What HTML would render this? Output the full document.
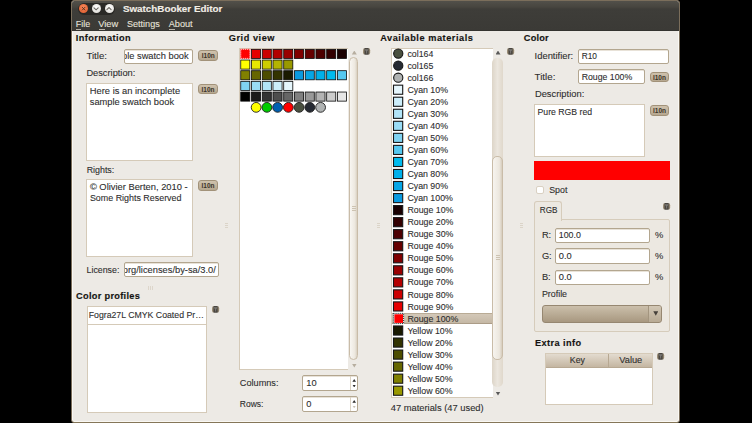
<!DOCTYPE html><html><head><meta charset='utf-8'><style>
html,body{margin:0;padding:0;background:#000;width:752px;height:423px;overflow:hidden;}
body{position:relative;font-family:"Liberation Sans",sans-serif;color:#2e2e2e;}
.a{position:absolute;box-sizing:border-box;}
.t{position:absolute;white-space:nowrap;-webkit-text-stroke:0.1px currentColor;}
.t[style*=bold]{-webkit-text-stroke:0.15px currentColor;}
.entry{position:absolute;box-sizing:border-box;background:#fff;border:1px solid #b3a68f;border-radius:2px;box-shadow:inset 0 1px 0 #e8e2d8;overflow:hidden;}
.tv{position:absolute;box-sizing:border-box;background:#fff;border:1px solid #d5cab8;}
.l10n{position:absolute;box-sizing:border-box;border:1px solid #a29279;border-radius:3px;background:linear-gradient(#cfc2ad,#b6a78f);font-weight:bold;font-size:6.5px;line-height:9px;text-align:center;color:#3a3328;}
.ico{position:absolute;width:7px;height:7px;border-radius:50%;background:#6e675c;box-sizing:border-box;border:1px solid #8f877a;}
.ico:after{content:"";position:absolute;left:1px;top:1.5px;border-left:1.5px solid transparent;border-right:1.5px solid transparent;border-top:2.5px solid #d8d0c0;}
</style></head><body>
<div class="a" style="left:70.80px;top:0.00px;width:609.20px;height:423.20px;background:#edeae5;border-radius:3.5px;border:1px solid #7b6e5b;border-bottom:1.2px solid #857658;box-shadow:inset 1px 0 #faf8f3,inset -1px 0 #faf8f3,inset 0 -1px #faf8f3;"></div>
<div class="a" style="left:71.80px;top:1.00px;width:607.20px;height:30.00px;background:linear-gradient(#52504a 0px,#47453f 6px,#3e3d39 8px,#3b3a36 29px,#2e2d2a 30px);border-radius:2.5px 2.5px 0 0;"></div>
<div class="a" style="left:77.50px;top:3.00px;width:37.50px;height:12.00px;background:#2a2926;border-radius:6px;"></div>
<div class="a" style="left:79.00px;top:4.20px;width:9.00px;height:9.00px;background:radial-gradient(circle at 50% 35%,#f5875a,#e0592a);border-radius:50%;"></div>
<div class="a" style="left:91.60px;top:4.20px;width:9.00px;height:9.00px;background:radial-gradient(circle at 50% 35%,#ffffff,#d9d6cf);border-radius:50%;"></div>
<div class="a" style="left:104.50px;top:4.20px;width:9.00px;height:9.00px;background:radial-gradient(circle at 50% 35%,#ffffff,#d9d6cf);border-radius:50%;"></div>
<svg class="a" style="left:0;top:0" width="752" height="40"><g stroke-linecap="round" fill="none"><path d="M82.3 7.3 L84.9 10.0 M84.9 7.3 L82.3 10.0" stroke="#4d2c1e" stroke-width="0.85"/><path d="M94 7.8 L96.1 9.8 L98.2 7.8" stroke="#6b6862" stroke-width="1.1"/><path d="M106.9 9.6 L109 7.6 L111.1 9.6" stroke="#6b6862" stroke-width="1.1"/></g></svg>
<div class="t" style="left:122.90px;top:4.20px;font-size:9.84px;line-height:9.84px;font-weight:bold;color:#f2eee6;">SwatchBooker Editor</div>
<div class="t" style="left:75.80px;top:20.30px;font-size:8.88px;line-height:8.88px;color:#e6e2d9;">File</div>
<div class="a" style="left:76.10px;top:28.50px;width:4.80px;height:0.80px;background:#b8b2a8;"></div>
<div class="t" style="left:98.20px;top:20.30px;font-size:9.36px;line-height:9.36px;color:#e6e2d9;">View</div>
<div class="a" style="left:98.50px;top:28.50px;width:6.00px;height:0.80px;background:#b8b2a8;"></div>
<div class="t" style="left:126.90px;top:20.30px;font-size:9.12px;line-height:9.12px;color:#e6e2d9;">Settings</div>
<div class="t" style="left:168.70px;top:20.30px;font-size:9.19px;line-height:9.19px;color:#e6e2d9;">About</div>
<div class="a" style="left:169.00px;top:28.50px;width:6.00px;height:0.80px;background:#b8b2a8;"></div>
<div class="t" style="left:75.70px;top:33.80px;font-size:9.2px;line-height:9.2px;letter-spacing:0.443px;font-weight:bold;color:#151412;">Information</div>
<div class="t" style="left:86.40px;top:50.80px;font-size:9.67px;line-height:9.67px;">Title:</div>
<div class="entry" style="left:124.4px;top:48.5px;width:68.3px;height:15px;"><div class="t" style="right:3px;top:2.6px;font-size:9.3px;line-height:9.3px;">ample swatch book</div></div>
<div class="l10n" style="left:198.3px;top:50.2px;width:20.0px;height:11.0px;">l10n</div>
<div class="t" style="left:86.40px;top:69.40px;font-size:9.28px;line-height:9.28px;">Description:</div>
<div class="a" style="left:86.00px;top:83.30px;width:107.40px;height:77.90px;background:#fff;border:1px solid #d5cab8;"></div>
<div class="t" style="left:89.80px;top:87.40px;font-size:9.35px;line-height:9.35px;">Here is an incomplete</div>
<div class="t" style="left:89.80px;top:98.00px;font-size:9.3px;line-height:9.3px;">sample swatch book</div>
<div class="l10n" style="left:198.3px;top:83.6px;width:19.399999999999977px;height:10.800000000000011px;">l10n</div>
<div class="t" style="left:86.70px;top:166.20px;font-size:8.87px;line-height:8.87px;">Rights:</div>
<div class="a" style="left:86.00px;top:179.00px;width:107.40px;height:78.40px;background:#fff;border:1px solid #d5cab8;"></div>
<div class="t" style="left:89.90px;top:183.30px;font-size:9.35px;line-height:9.35px;">© Olivier Berten, 2010 -</div>
<div class="t" style="left:89.90px;top:194.20px;font-size:8.92px;line-height:8.92px;">Some Rights Reserved</div>
<div class="l10n" style="left:198.3px;top:180.2px;width:19.399999999999977px;height:10.700000000000017px;">l10n</div>
<div class="t" style="left:86.60px;top:266.00px;font-size:8.81px;line-height:8.81px;">License:</div>
<div class="entry" style="left:124.3px;top:262.3px;width:94.5px;height:15px;"><div class="t" style="right:2px;top:2.6px;font-size:9.3px;line-height:9.3px;">creativecommons.org/licenses/by-sa/3.0/</div></div>
<div class="a" style="left:148.00px;top:286.00px;width:1.00px;height:4.00px;background:#ddd6cb;"></div>
<div class="a" style="left:150.00px;top:286.00px;width:1.00px;height:4.00px;background:#ddd6cb;"></div>
<div class="a" style="left:152.00px;top:286.00px;width:1.00px;height:4.00px;background:#ddd6cb;"></div>
<div class="t" style="left:76.00px;top:292.20px;font-size:9.2px;line-height:9.2px;letter-spacing:0.319px;font-weight:bold;color:#151412;">Color profiles</div>
<div class="a" style="left:86.60px;top:305.50px;width:120.60px;height:107.00px;background:#fff;border:1px solid #d5cab8;"></div>
<div class="a" style="left:87.60px;top:306.50px;width:118.60px;height:18.00px;border-bottom:1px solid #d5cab8;"></div>
<div class="t" style="left:88.70px;top:311.00px;font-size:8.74px;line-height:8.74px;">Fogra27L CMYK Coated Pr…</div>
<svg class="a" style="left:211.60px;top:305.70px;overflow:visible" width="7.2" height="6.8"><defs><linearGradient id="ig" x1="0" x2="1" y1="0" y2="0"><stop offset="0" stop-color="#b3a286"/><stop offset="0.3" stop-color="#4a4640"/><stop offset="0.7" stop-color="#4a4640"/><stop offset="1" stop-color="#b3a286"/></linearGradient></defs><rect x="0" y="0" width="7.2" height="6.8" rx="2.2" fill="url(#ig)"/><path d="M1.6 1.3 L5.6 1.3 L4.1 3.6 L4.1 5.6 L3.1 5.6 L3.1 3.6 Z" fill="#7a7874"/></svg>
<div class="a" style="left:225.00px;top:223.00px;width:3.00px;height:1.00px;background:#dbd4c8;"></div>
<div class="a" style="left:225.00px;top:225.00px;width:3.00px;height:1.00px;background:#dbd4c8;"></div>
<div class="a" style="left:225.00px;top:227.00px;width:3.00px;height:1.00px;background:#dbd4c8;"></div>
<div class="a" style="left:376.70px;top:223.00px;width:3.00px;height:1.00px;background:#dbd4c8;"></div>
<div class="a" style="left:376.70px;top:225.00px;width:3.00px;height:1.00px;background:#dbd4c8;"></div>
<div class="a" style="left:376.70px;top:227.00px;width:3.00px;height:1.00px;background:#dbd4c8;"></div>
<div class="a" style="left:520.20px;top:223.00px;width:3.00px;height:1.00px;background:#dbd4c8;"></div>
<div class="a" style="left:520.20px;top:225.00px;width:3.00px;height:1.00px;background:#dbd4c8;"></div>
<div class="a" style="left:520.20px;top:227.00px;width:3.00px;height:1.00px;background:#dbd4c8;"></div>
<div class="t" style="left:228.80px;top:33.80px;font-size:9.2px;line-height:9.2px;letter-spacing:0.538px;font-weight:bold;color:#151412;">Grid view</div>
<div class="a" style="left:238.80px;top:47.50px;width:109.60px;height:322.80px;background:#fff;border:1px solid #d5cab8;border-right:none;"></div>
<div class="a" style="left:351.80px;top:50.50px;width:5.00px;height:4.00px;clip-path:polygon(50% 0,100% 100%,0 100%);background:#b7ae9f;"></div>
<div class="a" style="left:351.80px;top:363.50px;width:5.00px;height:4.00px;clip-path:polygon(0 0,100% 0,50% 100%);background:#b7ae9f;"></div>
<div class="a" style="left:348.60px;top:57.00px;width:9.90px;height:303.00px;background:linear-gradient(90deg,#f8f6f2,#ede8df 70%,#d8cfc0);border:1px solid #c9bca8;border-radius:5px;"></div>
<div class="a" style="left:352.00px;top:205.70px;width:4.00px;height:1.00px;background:#cdc3b2;"></div>
<div class="a" style="left:352.00px;top:207.70px;width:4.00px;height:1.00px;background:#cdc3b2;"></div>
<div class="a" style="left:352.00px;top:209.70px;width:4.00px;height:1.00px;background:#cdc3b2;"></div>
<svg class="a" style="left:363.10px;top:48.00px;overflow:visible" width="7.2" height="6.8"><defs><linearGradient id="ig" x1="0" x2="1" y1="0" y2="0"><stop offset="0" stop-color="#b3a286"/><stop offset="0.3" stop-color="#4a4640"/><stop offset="0.7" stop-color="#4a4640"/><stop offset="1" stop-color="#b3a286"/></linearGradient></defs><rect x="0" y="0" width="7.2" height="6.8" rx="2.2" fill="url(#ig)"/><path d="M1.6 1.3 L5.6 1.3 L4.1 3.6 L4.1 5.6 L3.1 5.6 L3.1 3.6 Z" fill="#7a7874"/></svg>
<svg class="a" style="left:0;top:0" width="752" height="423"><rect x="240.30" y="48.90" width="10" height="10" fill="#ff0000"/><rect x="240.80" y="49.40" width="9" height="9" fill="none" stroke="#fff" stroke-width="0.9" stroke-dasharray="1 1"/><rect x="251.49" y="49.35" width="9.1" height="9.1" fill="#e60000" stroke="#0a0a0a" stroke-width="0.8"/><rect x="262.23" y="49.35" width="9.1" height="9.1" fill="#cc0000" stroke="#0a0a0a" stroke-width="0.8"/><rect x="272.97" y="49.35" width="9.1" height="9.1" fill="#b30000" stroke="#0a0a0a" stroke-width="0.8"/><rect x="283.71" y="49.35" width="9.1" height="9.1" fill="#990000" stroke="#0a0a0a" stroke-width="0.8"/><rect x="294.45" y="49.35" width="9.1" height="9.1" fill="#800000" stroke="#0a0a0a" stroke-width="0.8"/><rect x="305.19" y="49.35" width="9.1" height="9.1" fill="#660000" stroke="#0a0a0a" stroke-width="0.8"/><rect x="315.93" y="49.35" width="9.1" height="9.1" fill="#4d0000" stroke="#0a0a0a" stroke-width="0.8"/><rect x="326.67" y="49.35" width="9.1" height="9.1" fill="#330000" stroke="#0a0a0a" stroke-width="0.8"/><rect x="337.41" y="49.35" width="9.1" height="9.1" fill="#1a0000" stroke="#0a0a0a" stroke-width="0.8"/><rect x="240.75" y="60.02" width="9.1" height="9.1" fill="#ffff00" stroke="#0a0a0a" stroke-width="0.8"/><rect x="251.49" y="60.02" width="9.1" height="9.1" fill="#e6e600" stroke="#0a0a0a" stroke-width="0.8"/><rect x="262.23" y="60.02" width="9.1" height="9.1" fill="#cccc00" stroke="#0a0a0a" stroke-width="0.8"/><rect x="272.97" y="60.02" width="9.1" height="9.1" fill="#b3b300" stroke="#0a0a0a" stroke-width="0.8"/><rect x="283.71" y="60.02" width="9.1" height="9.1" fill="#999900" stroke="#0a0a0a" stroke-width="0.8"/><rect x="240.75" y="70.69" width="9.1" height="9.1" fill="#808000" stroke="#0a0a0a" stroke-width="0.8"/><rect x="251.49" y="70.69" width="9.1" height="9.1" fill="#666600" stroke="#0a0a0a" stroke-width="0.8"/><rect x="262.23" y="70.69" width="9.1" height="9.1" fill="#4d4d00" stroke="#0a0a0a" stroke-width="0.8"/><rect x="272.97" y="70.69" width="9.1" height="9.1" fill="#333300" stroke="#0a0a0a" stroke-width="0.8"/><rect x="283.71" y="70.69" width="9.1" height="9.1" fill="#1a1a00" stroke="#0a0a0a" stroke-width="0.8"/><rect x="294.45" y="70.69" width="9.1" height="9.1" fill="#0a9ae0" stroke="#0a0a0a" stroke-width="0.8"/><rect x="305.19" y="70.69" width="9.1" height="9.1" fill="#06a6e6" stroke="#0a0a0a" stroke-width="0.8"/><rect x="315.93" y="70.69" width="9.1" height="9.1" fill="#00b0ea" stroke="#0a0a0a" stroke-width="0.8"/><rect x="326.67" y="70.69" width="9.1" height="9.1" fill="#00bbee" stroke="#0a0a0a" stroke-width="0.8"/><rect x="337.41" y="70.69" width="9.1" height="9.1" fill="#55c8f0" stroke="#0a0a0a" stroke-width="0.8"/><rect x="240.75" y="81.36" width="9.1" height="9.1" fill="#80d3f2" stroke="#0a0a0a" stroke-width="0.8"/><rect x="251.49" y="81.36" width="9.1" height="9.1" fill="#9adcf5" stroke="#0a0a0a" stroke-width="0.8"/><rect x="262.23" y="81.36" width="9.1" height="9.1" fill="#b2e4f7" stroke="#0a0a0a" stroke-width="0.8"/><rect x="272.97" y="81.36" width="9.1" height="9.1" fill="#cdeefa" stroke="#0a0a0a" stroke-width="0.8"/><rect x="283.71" y="81.36" width="9.1" height="9.1" fill="#e6f6fc" stroke="#0a0a0a" stroke-width="0.8"/><rect x="240.75" y="92.03" width="9.1" height="9.1" fill="#000000" stroke="#0a0a0a" stroke-width="0.8"/><rect x="251.49" y="92.03" width="9.1" height="9.1" fill="#1a1a1a" stroke="#0a0a0a" stroke-width="0.8"/><rect x="262.23" y="92.03" width="9.1" height="9.1" fill="#333333" stroke="#0a0a0a" stroke-width="0.8"/><rect x="272.97" y="92.03" width="9.1" height="9.1" fill="#4d4d4d" stroke="#0a0a0a" stroke-width="0.8"/><rect x="283.71" y="92.03" width="9.1" height="9.1" fill="#666666" stroke="#0a0a0a" stroke-width="0.8"/><rect x="294.45" y="92.03" width="9.1" height="9.1" fill="#808080" stroke="#0a0a0a" stroke-width="0.8"/><rect x="305.19" y="92.03" width="9.1" height="9.1" fill="#999999" stroke="#0a0a0a" stroke-width="0.8"/><rect x="315.93" y="92.03" width="9.1" height="9.1" fill="#b3b3b3" stroke="#0a0a0a" stroke-width="0.8"/><rect x="326.67" y="92.03" width="9.1" height="9.1" fill="#cccccc" stroke="#0a0a0a" stroke-width="0.8"/><rect x="337.41" y="92.03" width="9.1" height="9.1" fill="#e6e6e6" stroke="#0a0a0a" stroke-width="0.8"/><circle cx="256.14" cy="107.35" r="4.9" fill="#ffff00" stroke="#1c1c1c" stroke-width="0.9"/><circle cx="266.88" cy="107.35" r="4.9" fill="#00cc00" stroke="#1c1c1c" stroke-width="0.9"/><circle cx="277.62" cy="107.35" r="4.9" fill="#0060b0" stroke="#1c1c1c" stroke-width="0.9"/><circle cx="288.36" cy="107.35" r="4.9" fill="#ff0000" stroke="#1c1c1c" stroke-width="0.9"/><circle cx="299.10" cy="107.35" r="4.9" fill="#4a5040" stroke="#1c1c1c" stroke-width="0.9"/><circle cx="309.84" cy="107.35" r="4.9" fill="#262a33" stroke="#1c1c1c" stroke-width="0.9"/><circle cx="320.58" cy="107.35" r="4.9" fill="#b0b3b3" stroke="#1c1c1c" stroke-width="0.9"/></svg>
<div class="t" style="left:239.80px;top:379.40px;font-size:9.16px;line-height:9.16px;">Columns:</div>
<div class="t" style="left:239.80px;top:400.30px;font-size:8.49px;line-height:8.49px;">Rows:</div>
<div class="entry" style="left:302.2px;top:375.4px;width:56.2px;height:15.600000000000023px;"></div>
<div class="a" style="left:349.60px;top:376.40px;width:0.80px;height:13.60px;background:#dcd3c5;"></div>
<div class="a" style="left:352.40px;top:379.00px;width:3.60px;height:2.80px;clip-path:polygon(50% 0,100% 100%,0 100%);background:#2b2b2b;"></div>
<div class="a" style="left:352.40px;top:384.60px;width:3.60px;height:2.80px;clip-path:polygon(0 0,100% 0,50% 100%);background:#2b2b2b;"></div>
<div class="t" style="left:306.30px;top:379.00px;font-size:9.3px;line-height:9.3px;">10</div>
<div class="entry" style="left:302.2px;top:396.4px;width:56.2px;height:15.5px;"></div>
<div class="a" style="left:349.60px;top:397.40px;width:0.80px;height:13.50px;background:#dcd3c5;"></div>
<div class="a" style="left:352.40px;top:400.00px;width:3.60px;height:2.80px;clip-path:polygon(50% 0,100% 100%,0 100%);background:#2b2b2b;"></div>
<div class="a" style="left:352.40px;top:405.50px;width:3.60px;height:2.80px;clip-path:polygon(0 0,100% 0,50% 100%);background:#c9c1b4;"></div>
<div class="t" style="left:306.30px;top:400.00px;font-size:9.3px;line-height:9.3px;">0</div>
<div class="t" style="left:380.20px;top:33.70px;font-size:9.2px;line-height:9.2px;letter-spacing:0.547px;font-weight:bold;color:#151412;">Available materials</div>
<div class="a" style="left:391.00px;top:47.50px;width:101.50px;height:350.30px;background:#fff;border:1px solid #d5cab8;border-right:none;"></div>
<div class="t" style="left:407.40px;top:49.70px;font-size:8.8px;line-height:8.8px;color:#2e2e2e;">col164</div>
<div class="t" style="left:407.40px;top:61.74px;font-size:8.8px;line-height:8.8px;color:#2e2e2e;">col165</div>
<div class="t" style="left:407.40px;top:73.78px;font-size:8.8px;line-height:8.8px;color:#2e2e2e;">col166</div>
<div class="t" style="left:407.40px;top:85.82px;font-size:8.8px;line-height:8.8px;color:#2e2e2e;">Cyan 10%</div>
<div class="t" style="left:407.40px;top:97.86px;font-size:8.8px;line-height:8.8px;color:#2e2e2e;">Cyan 20%</div>
<div class="t" style="left:407.40px;top:109.90px;font-size:8.8px;line-height:8.8px;color:#2e2e2e;">Cyan 30%</div>
<div class="t" style="left:407.40px;top:121.94px;font-size:8.8px;line-height:8.8px;color:#2e2e2e;">Cyan 40%</div>
<div class="t" style="left:407.40px;top:133.98px;font-size:8.8px;line-height:8.8px;color:#2e2e2e;">Cyan 50%</div>
<div class="t" style="left:407.40px;top:146.02px;font-size:8.8px;line-height:8.8px;color:#2e2e2e;">Cyan 60%</div>
<div class="t" style="left:407.40px;top:158.06px;font-size:8.8px;line-height:8.8px;color:#2e2e2e;">Cyan 70%</div>
<div class="t" style="left:407.40px;top:170.10px;font-size:8.8px;line-height:8.8px;color:#2e2e2e;">Cyan 80%</div>
<div class="t" style="left:407.40px;top:182.14px;font-size:8.8px;line-height:8.8px;color:#2e2e2e;">Cyan 90%</div>
<div class="t" style="left:407.40px;top:194.18px;font-size:8.8px;line-height:8.8px;color:#2e2e2e;">Cyan 100%</div>
<div class="t" style="left:407.40px;top:206.22px;font-size:8.8px;line-height:8.8px;color:#2e2e2e;">Rouge 10%</div>
<div class="t" style="left:407.40px;top:218.26px;font-size:8.8px;line-height:8.8px;color:#2e2e2e;">Rouge 20%</div>
<div class="t" style="left:407.40px;top:230.30px;font-size:8.8px;line-height:8.8px;color:#2e2e2e;">Rouge 30%</div>
<div class="t" style="left:407.40px;top:242.34px;font-size:8.8px;line-height:8.8px;color:#2e2e2e;">Rouge 40%</div>
<div class="t" style="left:407.40px;top:254.38px;font-size:8.8px;line-height:8.8px;color:#2e2e2e;">Rouge 50%</div>
<div class="t" style="left:407.40px;top:266.42px;font-size:8.8px;line-height:8.8px;color:#2e2e2e;">Rouge 60%</div>
<div class="t" style="left:407.40px;top:278.46px;font-size:8.8px;line-height:8.8px;color:#2e2e2e;">Rouge 70%</div>
<div class="t" style="left:407.40px;top:290.50px;font-size:8.8px;line-height:8.8px;color:#2e2e2e;">Rouge 80%</div>
<div class="t" style="left:407.40px;top:302.54px;font-size:8.8px;line-height:8.8px;color:#2e2e2e;">Rouge 90%</div>
<div class="a" style="left:391.60px;top:312.78px;width:100.70px;height:11.40px;background:linear-gradient(#d3c8b8,#c5b8a5);border-top:1px solid #b9ab95;border-bottom:1px solid #ab9c87;"></div>
<div class="t" style="left:407.40px;top:314.58px;font-size:8.8px;line-height:8.8px;color:#2e2e2e;">Rouge 100%</div>
<div class="t" style="left:407.40px;top:326.62px;font-size:8.8px;line-height:8.8px;color:#2e2e2e;">Yellow 10%</div>
<div class="t" style="left:407.40px;top:338.66px;font-size:8.8px;line-height:8.8px;color:#2e2e2e;">Yellow 20%</div>
<div class="t" style="left:407.40px;top:350.70px;font-size:8.8px;line-height:8.8px;color:#2e2e2e;">Yellow 30%</div>
<div class="t" style="left:407.40px;top:362.74px;font-size:8.8px;line-height:8.8px;color:#2e2e2e;">Yellow 40%</div>
<div class="t" style="left:407.40px;top:374.78px;font-size:8.8px;line-height:8.8px;color:#2e2e2e;">Yellow 50%</div>
<div class="t" style="left:407.40px;top:386.82px;font-size:8.8px;line-height:8.8px;color:#2e2e2e;">Yellow 60%</div>
<svg class="a" style="left:0;top:0" width="752" height="423"><circle cx="398.25" cy="53.60" r="4.6" fill="#4a5040" stroke="#141414" stroke-width="1.1"/><circle cx="398.25" cy="65.64" r="4.6" fill="#262a33" stroke="#141414" stroke-width="1.1"/><circle cx="398.25" cy="77.68" r="4.6" fill="#b0b3b3" stroke="#141414" stroke-width="1.1"/><rect x="393.5" y="85.17" width="9.2" height="9.1" fill="#e6f6fc" stroke="#161616" stroke-width="1.1"/><rect x="393.5" y="97.21" width="9.2" height="9.1" fill="#cdeefa" stroke="#161616" stroke-width="1.1"/><rect x="393.5" y="109.25" width="9.2" height="9.1" fill="#b2e4f7" stroke="#161616" stroke-width="1.1"/><rect x="393.5" y="121.29" width="9.2" height="9.1" fill="#9adcf5" stroke="#161616" stroke-width="1.1"/><rect x="393.5" y="133.33" width="9.2" height="9.1" fill="#80d3f2" stroke="#161616" stroke-width="1.1"/><rect x="393.5" y="145.37" width="9.2" height="9.1" fill="#55c8f0" stroke="#161616" stroke-width="1.1"/><rect x="393.5" y="157.41" width="9.2" height="9.1" fill="#00bbee" stroke="#161616" stroke-width="1.1"/><rect x="393.5" y="169.45" width="9.2" height="9.1" fill="#00b0ea" stroke="#161616" stroke-width="1.1"/><rect x="393.5" y="181.49" width="9.2" height="9.1" fill="#06a6e6" stroke="#161616" stroke-width="1.1"/><rect x="393.5" y="193.53" width="9.2" height="9.1" fill="#0a9ae0" stroke="#161616" stroke-width="1.1"/><rect x="393.5" y="205.57" width="9.2" height="9.1" fill="#1a0000" stroke="#161616" stroke-width="1.1"/><rect x="393.5" y="217.61" width="9.2" height="9.1" fill="#330000" stroke="#161616" stroke-width="1.1"/><rect x="393.5" y="229.65" width="9.2" height="9.1" fill="#4d0000" stroke="#161616" stroke-width="1.1"/><rect x="393.5" y="241.69" width="9.2" height="9.1" fill="#660000" stroke="#161616" stroke-width="1.1"/><rect x="393.5" y="253.73" width="9.2" height="9.1" fill="#800000" stroke="#161616" stroke-width="1.1"/><rect x="393.5" y="265.77" width="9.2" height="9.1" fill="#990000" stroke="#161616" stroke-width="1.1"/><rect x="393.5" y="277.81" width="9.2" height="9.1" fill="#b30000" stroke="#161616" stroke-width="1.1"/><rect x="393.5" y="289.85" width="9.2" height="9.1" fill="#cc0000" stroke="#161616" stroke-width="1.1"/><rect x="393.5" y="301.89" width="9.2" height="9.1" fill="#e60000" stroke="#161616" stroke-width="1.1"/><rect x="393.0" y="312.98" width="11" height="11" fill="#e8f4f2"/><rect x="393.4" y="313.38" width="10.2" height="10.2" fill="none" stroke="#111" stroke-width="0.9" stroke-dasharray="1.1 1"/><rect x="394.4" y="314.28" width="8.6" height="8.6" fill="#ff0000"/><rect x="393.5" y="325.97" width="9.2" height="9.1" fill="#1a1a00" stroke="#161616" stroke-width="1.1"/><rect x="393.5" y="338.01" width="9.2" height="9.1" fill="#333300" stroke="#161616" stroke-width="1.1"/><rect x="393.5" y="350.05" width="9.2" height="9.1" fill="#4d4d00" stroke="#161616" stroke-width="1.1"/><rect x="393.5" y="362.09" width="9.2" height="9.1" fill="#666600" stroke="#161616" stroke-width="1.1"/><rect x="393.5" y="374.13" width="9.2" height="9.1" fill="#808000" stroke="#161616" stroke-width="1.1"/><rect x="393.5" y="386.17" width="9.2" height="9.1" fill="#999900" stroke="#161616" stroke-width="1.1"/></svg>
<div class="a" style="left:495.50px;top:50.50px;width:5.00px;height:4.00px;clip-path:polygon(50% 0,100% 100%,0 100%);background:#5a5a5a;"></div>
<div class="a" style="left:495.50px;top:391.50px;width:5.00px;height:4.00px;clip-path:polygon(0 0,100% 0,50% 100%);background:#5a5a5a;"></div>
<div class="a" style="left:492.30px;top:58.40px;width:10.70px;height:328.60px;background:linear-gradient(90deg,#ddd5c8,#ebe6de 50%,#e0d8cb);border-radius:5px;"></div>
<div class="a" style="left:492.30px;top:156.00px;width:10.70px;height:204.00px;background:linear-gradient(90deg,#f7f4ef,#ece7de 70%,#d6ccbc);border:1px solid #c9bca8;border-radius:5px;"></div>
<div class="a" style="left:496.00px;top:255.00px;width:4.00px;height:1.00px;background:#cdc3b2;"></div>
<div class="a" style="left:496.00px;top:257.00px;width:4.00px;height:1.00px;background:#cdc3b2;"></div>
<div class="a" style="left:496.00px;top:259.00px;width:4.00px;height:1.00px;background:#cdc3b2;"></div>
<svg class="a" style="left:506.80px;top:48.00px;overflow:visible" width="7.2" height="6.8"><defs><linearGradient id="ig" x1="0" x2="1" y1="0" y2="0"><stop offset="0" stop-color="#b3a286"/><stop offset="0.3" stop-color="#4a4640"/><stop offset="0.7" stop-color="#4a4640"/><stop offset="1" stop-color="#b3a286"/></linearGradient></defs><rect x="0" y="0" width="7.2" height="6.8" rx="2.2" fill="url(#ig)"/><path d="M1.6 1.3 L5.6 1.3 L4.1 3.6 L4.1 5.6 L3.1 5.6 L3.1 3.6 Z" fill="#7a7874"/></svg>
<div class="t" style="left:390.70px;top:403.60px;font-size:9.35px;line-height:9.35px;">47 materials (47 used)</div>
<div class="t" style="left:523.80px;top:34.00px;font-size:9.2px;line-height:9.2px;letter-spacing:0.200px;font-weight:bold;color:#151412;">Color</div>
<div class="t" style="left:534.60px;top:51.00px;font-size:9.39px;line-height:9.39px;">Identifier:</div>
<div class="entry" style="left:578.3px;top:48.5px;width:90.7px;height:15px;"></div>
<div class="t" style="left:581.70px;top:52.30px;font-size:8.34px;line-height:8.34px;">R10</div>
<div class="t" style="left:534.60px;top:72.00px;font-size:9.76px;line-height:9.76px;">Title:</div>
<div class="entry" style="left:578.3px;top:69.3px;width:66.3px;height:15px;"></div>
<div class="t" style="left:581.70px;top:73.20px;font-size:8.74px;line-height:8.74px;">Rouge 100%</div>
<div class="l10n" style="left:649.7px;top:71.5px;width:19.5px;height:10.200000000000003px;">l10n</div>
<div class="t" style="left:534.90px;top:90.30px;font-size:9.36px;line-height:9.36px;">Description:</div>
<div class="a" style="left:534.10px;top:104.30px;width:110.90px;height:52.50px;background:#fff;border:1px solid #d5cab8;"></div>
<div class="t" style="left:537.50px;top:108.20px;font-size:8.7px;line-height:8.7px;">Pure RGB red</div>
<div class="l10n" style="left:649.8px;top:105px;width:19.5px;height:10.5px;">l10n</div>
<div class="a" style="left:534.10px;top:160.70px;width:135.90px;height:19.00px;background:#ff0000;"></div>
<div class="a" style="left:536.20px;top:186.40px;width:7.40px;height:7.90px;background:#fff;border:1px solid #d9d0c2;border-radius:2px;"></div>
<div class="t" style="left:549.20px;top:185.80px;font-size:8.85px;line-height:8.85px;">Spot</div>
<div class="a" style="left:534.40px;top:219.20px;width:135.60px;height:113.20px;border:1px solid #d6ccbb;border-radius:2px;background:#ece8e1;"></div>
<div class="a" style="left:534.40px;top:201.00px;width:27.50px;height:19.50px;border:1px solid #d6ccbb;border-bottom:none;border-radius:3px 3px 0 0;background:#ece8e1;"></div>
<div class="t" style="left:539.80px;top:206.80px;font-size:8.17px;line-height:8.17px;">RGB</div>
<svg class="a" style="left:662.50px;top:202.50px;overflow:visible" width="7.2" height="6.8"><defs><linearGradient id="ig" x1="0" x2="1" y1="0" y2="0"><stop offset="0" stop-color="#b3a286"/><stop offset="0.3" stop-color="#4a4640"/><stop offset="0.7" stop-color="#4a4640"/><stop offset="1" stop-color="#b3a286"/></linearGradient></defs><rect x="0" y="0" width="7.2" height="6.8" rx="2.2" fill="url(#ig)"/><path d="M1.6 1.3 L5.6 1.3 L4.1 3.6 L4.1 5.6 L3.1 5.6 L3.1 3.6 Z" fill="#7a7874"/></svg>
<div class="t" style="left:541.90px;top:231.00px;font-size:9.3px;line-height:9.3px;">R:</div>
<div class="entry" style="left:554.9px;top:227.5px;width:95.4px;height:15.599999999999994px;"></div>
<div class="t" style="left:558.80px;top:231.30px;font-size:8.83px;line-height:8.83px;">100.0</div>
<div class="t" style="left:655.00px;top:231.10px;font-size:9.3px;line-height:9.3px;">%</div>
<div class="t" style="left:541.90px;top:251.80px;font-size:9.3px;line-height:9.3px;">G:</div>
<div class="entry" style="left:554.9px;top:248.3px;width:95.4px;height:15.599999999999966px;"></div>
<div class="t" style="left:558.80px;top:252.10px;font-size:9.3px;line-height:9.3px;">0.0</div>
<div class="t" style="left:655.00px;top:251.90px;font-size:9.3px;line-height:9.3px;">%</div>
<div class="t" style="left:541.90px;top:273.10px;font-size:9.3px;line-height:9.3px;">B:</div>
<div class="entry" style="left:554.9px;top:269.6px;width:95.4px;height:15.099999999999966px;"></div>
<div class="t" style="left:558.80px;top:273.40px;font-size:9.3px;line-height:9.3px;">0.0</div>
<div class="t" style="left:655.00px;top:273.20px;font-size:9.3px;line-height:9.3px;">%</div>
<div class="t" style="left:541.90px;top:290.20px;font-size:8.89px;line-height:8.89px;">Profile</div>
<div class="a" style="left:542.20px;top:304.50px;width:119.70px;height:18.30px;background:linear-gradient(#cbbfab,#a89880);border:1px solid #968771;border-radius:3px;"></div>
<div class="a" style="left:648.00px;top:305.50px;width:12.90px;height:16.30px;background:linear-gradient(#d2c7b5,#b8aa94);border-radius:0 2px 2px 0;border-left:1px solid #a3957f;"></div>
<div class="a" style="left:653.30px;top:311.30px;width:5.00px;height:4.50px;clip-path:polygon(0 0,100% 0,50% 100%);background:#45403a;"></div>
<div class="t" style="left:535.00px;top:338.50px;font-size:9.2px;line-height:9.2px;letter-spacing:0.412px;font-weight:bold;color:#151412;">Extra info</div>
<div class="a" style="left:545.30px;top:352.50px;width:107.30px;height:52.90px;background:#fff;border:1px solid #d5cab8;"></div>
<div class="a" style="left:546.30px;top:353.50px;width:105.30px;height:14.70px;background:linear-gradient(#e3dbcf,#c4b6a2);border-bottom:1px solid #b7a892;"></div>
<div class="a" style="left:608.30px;top:353.50px;width:0.80px;height:14.70px;background:#b7a892;"></div>
<div class="t" style="left:569.80px;top:356.40px;font-size:8.76px;line-height:8.76px;">Key</div>
<div class="t" style="left:619.30px;top:356.40px;font-size:9.26px;line-height:9.26px;">Value</div>
<svg class="a" style="left:656.90px;top:352.70px;overflow:visible" width="7.2" height="6.8"><defs><linearGradient id="ig" x1="0" x2="1" y1="0" y2="0"><stop offset="0" stop-color="#b3a286"/><stop offset="0.3" stop-color="#4a4640"/><stop offset="0.7" stop-color="#4a4640"/><stop offset="1" stop-color="#b3a286"/></linearGradient></defs><rect x="0" y="0" width="7.2" height="6.8" rx="2.2" fill="url(#ig)"/><path d="M1.6 1.3 L5.6 1.3 L4.1 3.6 L4.1 5.6 L3.1 5.6 L3.1 3.6 Z" fill="#7a7874"/></svg>
</body></html>
